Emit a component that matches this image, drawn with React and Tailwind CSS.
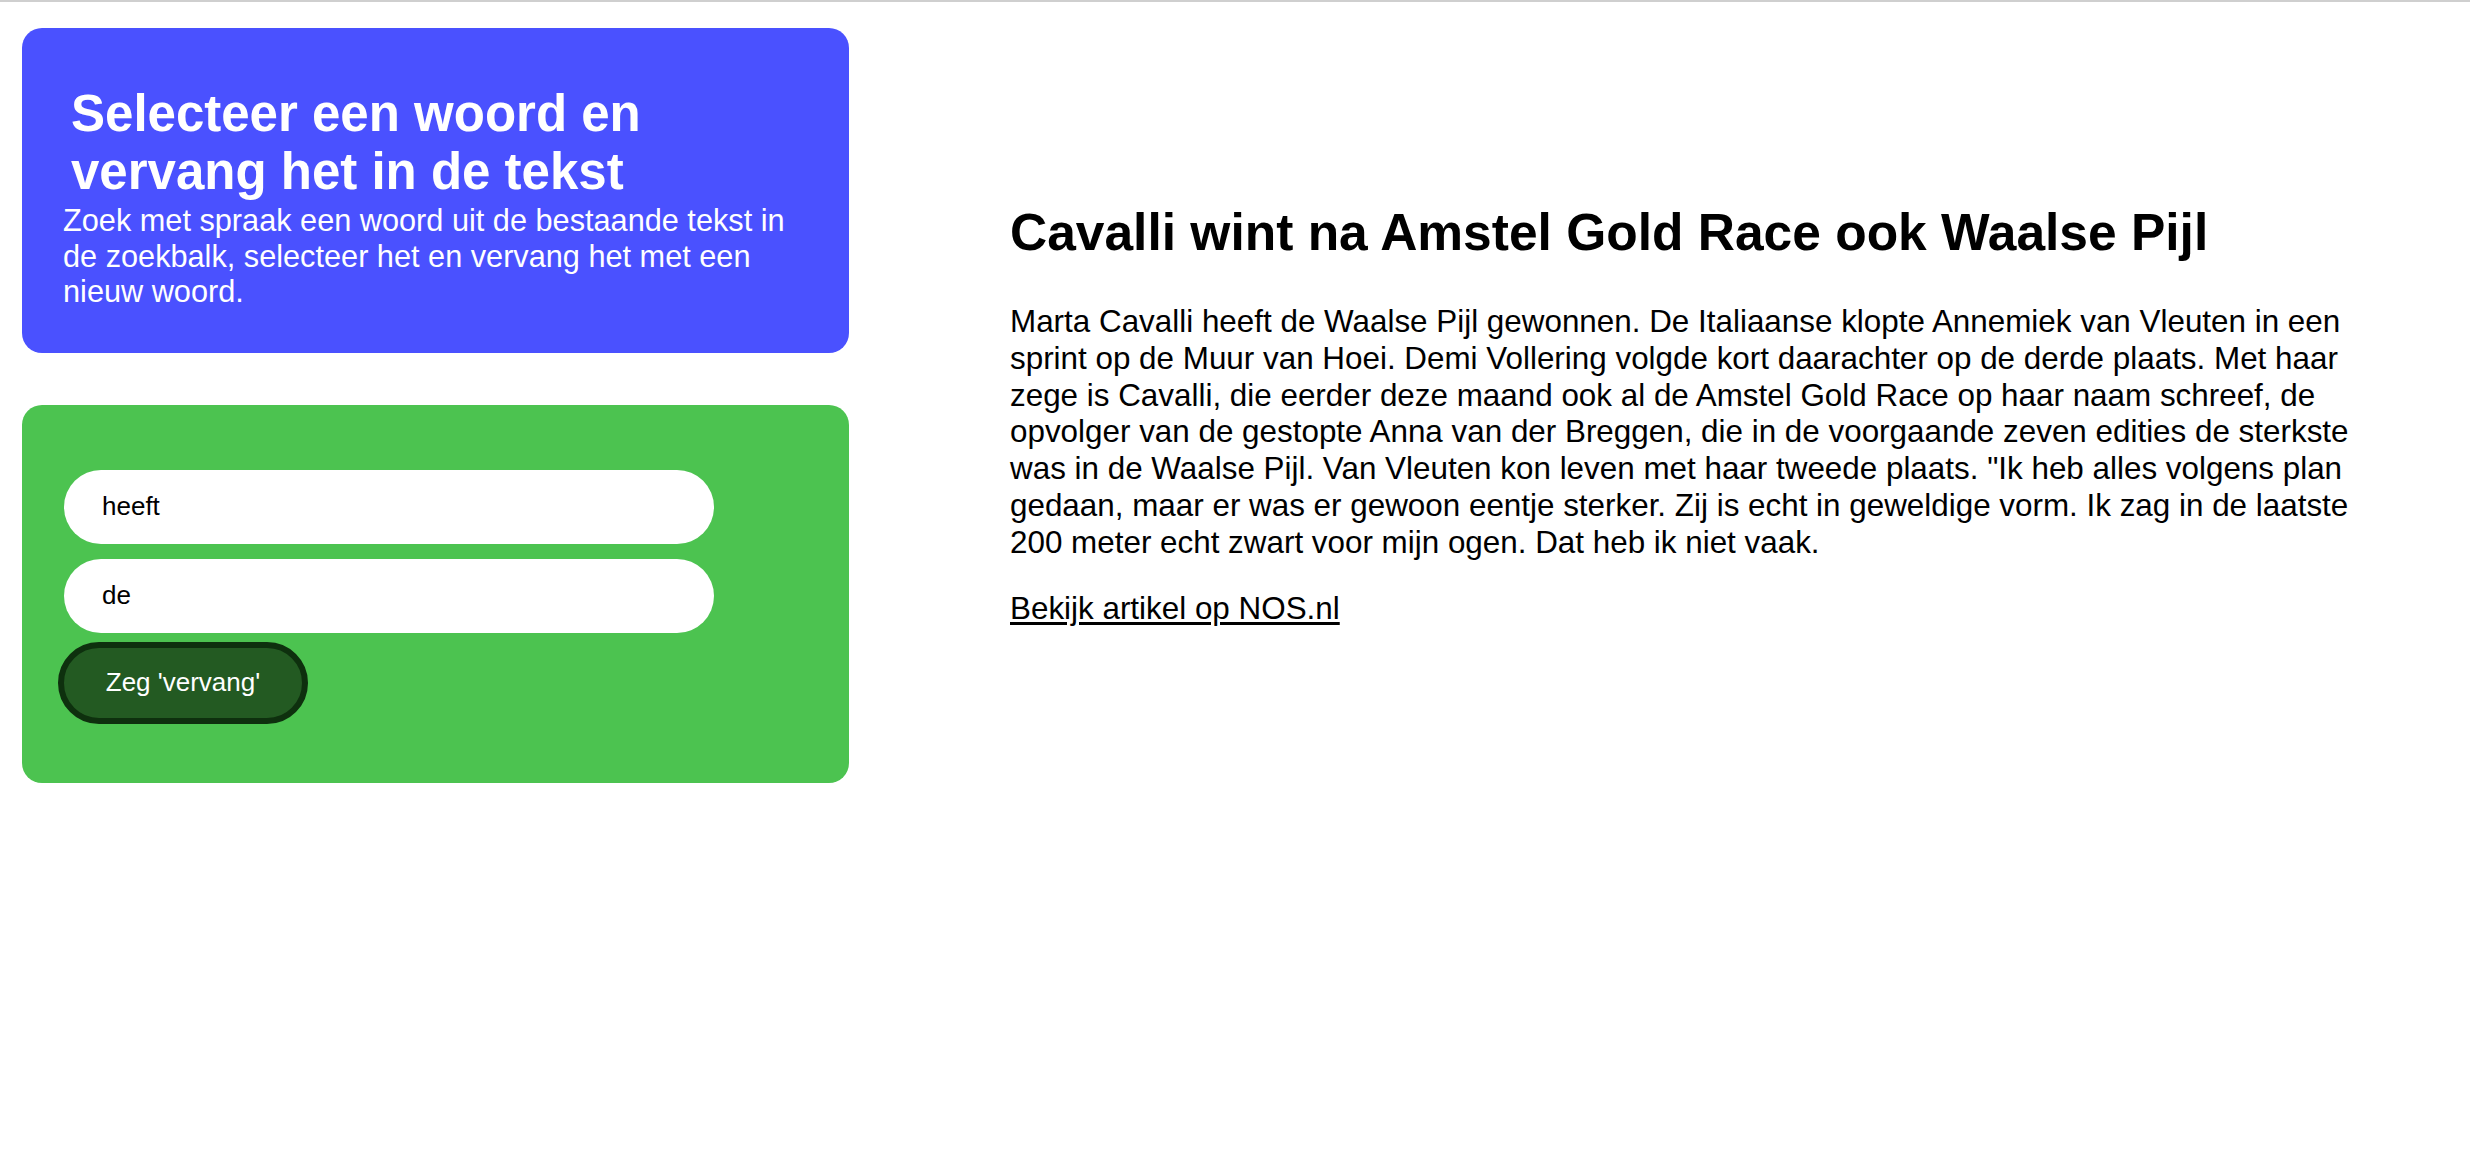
import { useState } from 'react'

const font = { fontFamily: '"Liberation Sans", Arial, Helvetica, sans-serif' }

export default function App() {
  const [search, setSearch] = useState('heeft')
  const [replace, setReplace] = useState('de')

  return (
    <div className="min-h-screen border-t-2 border-[#cfcfcf] bg-white" style={font}>
      <div className="flex items-start pl-[22px] pt-[26px]">
        {/* linker kolom */}
        <div className="flex w-[827px] shrink-0 flex-col gap-[52px]">
          <div className="rounded-[20px] bg-[#4a51ff] pb-[43px] pl-[41px] pr-[42px] pt-[57px] text-white">
            <h1 className="pl-[8px] text-[51px] font-bold leading-[58px]">
              Selecteer een woord en vervang het in de tekst
            </h1>
            <p className="mt-[2px] text-[30.7px] leading-[35.5px]">
              Zoek met spraak een woord uit de bestaande tekst in de zoekbalk, selecteer het en vervang het met een
              nieuw woord.
            </p>
          </div>

          <div className="flex flex-col rounded-[20px] bg-[#4cc350] pb-[59px] pl-[42px] pt-[65px]">
            <div className="flex flex-col gap-[15px]">
              <input
                type="text"
                value={search}
                onChange={(e) => setSearch(e.target.value)}
                className="h-[74px] w-[650px] rounded-full bg-white pl-[38px] text-[26px] text-black outline-none"
              />
              <input
                type="text"
                value={replace}
                onChange={(e) => setReplace(e.target.value)}
                className="h-[74px] w-[650px] rounded-full bg-white pl-[38px] text-[26px] text-black outline-none"
              />
            </div>
            <button className="-ml-[6px] mt-[9px] h-[82px] w-[250px] rounded-full border-[6px] border-[#0e300e] bg-[#235a22] text-[26px] text-white">
              Zeg 'vervang'
            </button>
          </div>
        </div>

        {/* artikel */}
        <div className="ml-[161px] mt-[175px] w-[1380px] shrink-0 text-black">
          <h2 className="text-[51.5px] font-bold leading-[58px]">Cavalli wint na Amstel Gold Race ook Waalse Pijl</h2>
          <p className="mt-[43px] text-[31.4px] leading-[36.8px]">
            Marta Cavalli heeft de Waalse Pijl gewonnen. De Italiaanse klopte Annemiek van Vleuten in een sprint op de
            Muur van Hoei. Demi Vollering volgde kort daarachter op de derde plaats. Met haar zege is Cavalli, die
            eerder deze maand ook al de Amstel Gold Race op haar naam schreef, de opvolger van de gestopte Anna van der
            Breggen, die in de voorgaande zeven edities de sterkste was in de Waalse Pijl. Van Vleuten kon leven met
            haar tweede plaats. "Ik heb alles volgens plan gedaan, maar er was er gewoon eentje sterker. Zij is echt in
            geweldige vorm. Ik zag in de laatste 200 meter echt zwart voor mijn ogen. Dat heb ik niet vaak.
          </p>
          <a
            href="#"
            className="mt-[29px] inline-block text-[31.4px] leading-[36.8px] text-black underline decoration-[2.5px] underline-offset-[3px]"
          >
            Bekijk artikel op NOS.nl
          </a>
        </div>
      </div>
    </div>
  )
}
